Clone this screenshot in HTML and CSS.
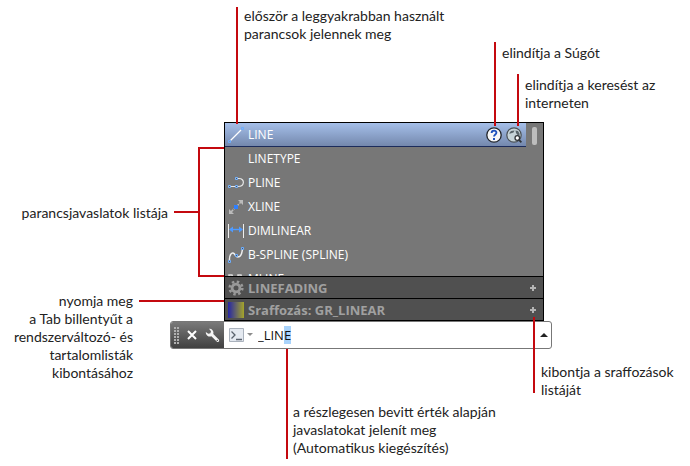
FILE: index.html
```html
<!DOCTYPE html>
<html lang="hu">
<head>
    <meta charset="utf-8">
    <title>Parancssor – automatikus kiegészítés</title>
    <link rel="stylesheet" href="styles.css">
</head>
<body>
<main class="figure">

    <div class="top-notes">
        <div class="callout callout-frequent">először a leggyakrabban használt<br>parancsok jelennek meg</div>
        <div class="callout callout-help">
            elindítja a Súgót
            <div class="callout callout-web">elindítja a keresést az<br>interneten</div>
        </div>
    </div>

    <div class="middle">
        <aside class="side-notes">
            <div class="note-list">
                <span class="note-text">parancsjavaslatok listája</span>
                <span class="dash"></span>
                <span class="bracket"></span>
            </div>
            <div class="note-tab">
                <span class="note-text">nyomja meg<br>a Tab billentyűt a<br>rendszerváltozó- és<br>tartalomlisták<br>kibontásához</span>
                <span class="dash"></span>
            </div>
        </aside>

        <div class="main">
            <section class="command">
                <div class="suggestions">
                    <div class="list">
                        <ul class="items">
                            <li class="item active">
                                <svg class="icon" viewBox="0 0 16 16"><path d="M2.5 13.5L13 3" stroke="#fff" stroke-width="1.2"/><path d="M.5 13.5h2v2h-2zM13.5.5h2v2h-2z" fill="none" stroke="#6caeff"/></svg>
                                <span class="name">LINE</span>
                                <button class="round" aria-label="Súgó">
                                    <svg viewBox="0 0 16 16"><circle cx="8" cy="8" r="7.2" fill="#f5f6f8" stroke="#22262c" stroke-width="1.3"/><path d="M5.6 6.1C5.6 2.8 10.6 3 10.4 5.8C10.3 7.5 8 7.5 8 9.6" fill="none" stroke="#1c50bd" stroke-width="1.9"/><path d="M7 10.9h2v2H7z" fill="#1c50bd"/></svg>
                                </button>
                                <button class="round" aria-label="Keresés az interneten">
                                    <svg viewBox="0 0 16 16"><circle cx="8" cy="8" r="7.2" fill="#c6d3d8" stroke="#4a5156" stroke-width="1.2"/><path d="M3 6.5L5 4L8.5 3.5L7.5 5.5L4.5 6.5zM9.5 3.5L12 4L13.5 6.5V9L11.5 8L10 6z" fill="#59646a"/><circle cx="11.3" cy="11" r="2.3" fill="#fff" stroke="#303438" stroke-width="1.3"/><path d="M13 12.8L15.4 15.4" stroke="#303438" stroke-width="1.8"/></svg>
                                </button>
                            </li>
                            <li class="item"><span class="icon"></span><span class="name">LINETYPE</span></li>
                            <li class="item">
                                <svg class="icon" viewBox="0 0 16 16"><path d="M2 11.5H8M9 3.5H11C17 3.5 17 11.5 10 11.5" fill="none" stroke="#e6e6e6" stroke-width="1.2"/><path d="M.5 10.5h2v2h-2zM7.5 10.5h2v2h-2zM7.5 2.5h2v2h-2z" fill="#555" stroke="#78b4ff"/></svg>
                                <span class="name">PLINE</span>
                            </li>
                            <li class="item">
                                <svg class="icon" viewBox="0 0 16 16"><path d="M3 13L13 3" stroke="#bbb" stroke-width="1.5" stroke-dasharray="3 1"/><path d="M10 1h5v5zM1 10v5h5z" fill="#bbb"/><path d="M6 6h4v4H6z" fill="#2f80ff"/></svg>
                                <span class="name">XLINE</span>
                            </li>
                            <li class="item">
                                <svg class="icon" viewBox="0 0 16 16"><path d="M.5 1v14M15.5 1v14" stroke="#eee"/><path d="M3 6.5h10" stroke="#4f9bff" stroke-width="1.4"/><path d="M1 6.5L5 3.5v6zM15 6.5L11 3.5v6z" fill="#4f9bff"/></svg>
                                <span class="name">DIMLINEAR</span>
                            </li>
                            <li class="item">
                                <svg class="icon" viewBox="0 0 16 16"><path d="M1.5 14C1 8 4 4 6.5 7C8 9 8.5 11 11.5 9.5C14 8 14 5 14.5 2" fill="none" stroke="#eee" stroke-width="1.5"/><path d="M.5 13.5h2v2h-2zM7.5 7.5h2v2h-2zM13.5.5h2v2h-2z" fill="#555" stroke="#6caeff"/></svg>
                                <span class="name">B-SPLINE (SPLINE)</span>
                            </li>
                            <li class="item">
                                <svg class="icon" viewBox="0 0 16 16"><path d="M1 14V4h3l3 10M10 14V4h3l2 10" fill="none" stroke="#ddd" stroke-width="1.5"/></svg>
                                <span class="name">MLINE</span>
                            </li>
                        </ul>
                        <div class="scroll"><div class="thumb"></div></div>
                    </div>
                    <button class="category">
                        <svg class="icon" viewBox="0 0 16 16"><circle cx="8" cy="8" r="3.9" fill="none" stroke="#999" stroke-width="2.8"/><circle cx="8" cy="8" r="6.3" fill="none" stroke="#999" stroke-width="2.6" stroke-dasharray="2.45 2.5"/></svg>
                        <span class="name">LINEFADING</span>
                        <svg class="plus" viewBox="0 0 6 6"><path d="M2 0h2v2h2v2H4v2H2V4H0V2h2z" fill="#b4b4b4"/></svg>
                    </button>
                    <button class="category">
                        <span class="icon swatch"></span>
                        <span class="name">Sraffozás: GR_LINEAR</span>
                        <svg class="plus" viewBox="0 0 6 6"><path d="M2 0h2v2h2v2H4v2H2V4H0V2h2z" fill="#b4b4b4"/></svg>
                    </button>
                </div>

                <div class="bar">
                    <div class="tools">
                        <svg width="5" height="17" viewBox="0 0 5 17"><path d="M1 0V17M4 0V17" stroke="#b0b0b0" stroke-width="2" stroke-dasharray="2 1"/></svg>
                        <button aria-label="Bezárás"><svg width="10" height="10" viewBox="0 0 10 10"><path d="M1 1L9 9M9 1L1 9" stroke="#fff" stroke-width="2"/></svg></button>
                        <button aria-label="Testreszabás"><svg width="15" height="15" viewBox="0 0 15 15"><path d="M4 .8A4 4 0 0 1 8.3 6L14 11.8Q14.8 14.2 12.2 14L6.4 8.2A4 4 0 0 1 .8 4L3.3 5.8L5.4 5.3L6 3.3z" fill="#f4f4f4"/><circle cx="12.3" cy="12.4" r=".7" fill="#555"/></svg></button>
                    </div>
                    <button class="recent" aria-label="Legutóbbi parancsok">
                        <svg width="25" height="16" viewBox="0 0 25 16"><path d="M.5 1.5h14v13H.5z" fill="#e4e9f0" stroke="#aab2bd"/><path d="M2.5 4.5L6 8L2.5 11.5M7 12.5h6" fill="none" stroke="#59616c" stroke-width="1.3"/><path d="M18 6h6l-3 3z" fill="#8c8c8c"/></svg>
                    </button>
                    <input class="prompt" id="prompt" type="text" value="_LINE" aria-label="Parancs" spellcheck="false">
                    <button class="history" aria-label="Előzmények"><svg width="8" height="4" viewBox="0 0 8 4"><path d="M0 4L4 0L8 4z" fill="#222"/></svg></button>
                </div>
            </section>

            <div class="bottom-notes">
                <div class="callout callout-value">a részlegesen bevitt érték alapján<br>javaslatokat jelenít meg<br>(Automatikus kiegészítés)</div>
                <div class="callout callout-hatch">kibontja a sraffozások<br>listáját</div>
            </div>
        </div>
    </div>

</main>
<script>
    // the completed part of the command stays selected
    const prompt = document.getElementById('prompt');
    prompt.focus();
    prompt.setSelectionRange(4, 5);
</script>
</body>
</html>
```
FILE: styles.css
```css
* {
    box-sizing: border-box;
}
body {
    margin: 0;
    background: #fff;
    color: #222;
    font-family: Lato, "Open Sans", sans-serif;
    font-size: 14px;
    line-height: 18px;
}
button {
    margin: 0;
    padding: 0;
    border: none;
    background: none;
    font: inherit;
    display: flex;
    align-items: center;
}
svg {
    display: block;
}
.figure {
    padding-top: 7px;
}

/* callouts, the leader line is the left border */
.callout {
    border-left: 2px solid #c4090f;
    padding-left: 6px;
    white-space: nowrap;
}
.top-notes {
    display: grid;
    grid-template-columns: 236fr 258fr 196fr;
    position: relative;
    z-index: 1;
}
.callout-frequent {
    grid-column: 2;
    height: 117px;
}
.callout-help {
    grid-column: 3;
    margin-top: 35px;
    padding-top: 2px;
}
.callout-web {
    margin: 12px 0 0 15px;
    height: 52px;
    padding-top: 2px;
}

.middle {
    display: grid;
    grid-template-columns: 224fr 466fr;
    margin-top: -4px;
}
.side-notes {
    text-align: right;
    padding-top: 25px;
}
.note-list,
.note-tab {
    display: flex;
    justify-content: flex-end;
}
.note-list {
    align-items: center;
}
.note-list .note-text {
    padding-top: 2px;
}
.dash {
    height: 2px;
    background: #c4090f;
}
.note-list .dash {
    width: 24px;
    margin-left: 6px;
}
.bracket {
    width: 26px;
    height: 130px;
    border: 2px solid #c4090f;
    border-right: none;
}
.note-tab {
    margin-top: 15px;
}
.note-tab .dash {
    width: 85px;
    margin: 8px 0 0 6px;
}

/* suggestion list */
.command {
    margin-right: 146px;
    font-family: "Open Sans", "Noto Sans", sans-serif;
    font-size: 13px;
}
.suggestions {
    border: 1px solid #000;
}
.list {
    display: flex;
    height: 153px;
    overflow: hidden;
    background: #777;
}
.items {
    flex: 1;
    margin: 0;
    padding: 0;
    list-style: none;
    font-size: 12px;
}
.item {
    display: flex;
    align-items: center;
    gap: 4px;
    height: 24px;
    padding: 0 4px 0 3px;
    color: #fff;
}
.item.active {
    background: linear-gradient(#a5bfe9, #7488ad);
    border-bottom: 1px solid #1c2c5c;
}
.icon {
    width: 16px;
    height: 16px;
    flex: none;
}
.name {
    flex: 1;
    text-align: left;
}
.round {
    width: 16px;
    height: 16px;
}
.round svg {
    width: 16px;
}
.scroll {
    width: 17px;
    padding: 4px 6px;
}
.thumb {
    height: 18px;
    border-radius: 2px;
    background: #bdbdbd;
}
.category {
    width: 100%;
    height: 22px;
    gap: 4px;
    padding: 0 7px 0 3px;
    border-top: 1px solid #000;
    background: #505050;
    color: #a0a0a0;
    font-weight: bold;
}
.swatch {
    background: linear-gradient(90deg, #2525a5, #a5a52a);
}
.plus {
    width: 6px;
    height: 6px;
}

/* command line */
.bar {
    display: flex;
    height: 28px;
    margin: 0 -8px 0 -54px;
    border: 1px solid #777;
    border-radius: 3px;
    background: #fff;
    overflow: hidden;
}
.tools {
    display: flex;
    align-items: center;
    gap: 8px;
    width: 53px;
    padding-left: 3px;
    background: linear-gradient(#7a7a7a, #404040);
}
.recent {
    margin-left: 5px;
}
.prompt {
    flex: 1;
    min-width: 0;
    padding: 0;
    margin-left: 4px;
    border: none;
    outline: none;
    background: none;
    color: #111;
    font: inherit;
}
.prompt::selection {
    background: #a9d3fb;
    color: #111;
}
.history {
    padding: 0 3px;
}

.bottom-notes {
    display: grid;
    grid-template-columns: 62fr 247fr 157fr;
    align-items: start;
    margin-top: -32px;
    position: relative;
    z-index: 1;
    pointer-events: none;
}
.callout-value {
    grid-column: 2;
    margin-top: 32px;
    padding: 54px 0 2px 5px;
}
.callout-hatch {
    grid-column: 3;
    height: 76px;
    padding-top: 46px;
}
```
